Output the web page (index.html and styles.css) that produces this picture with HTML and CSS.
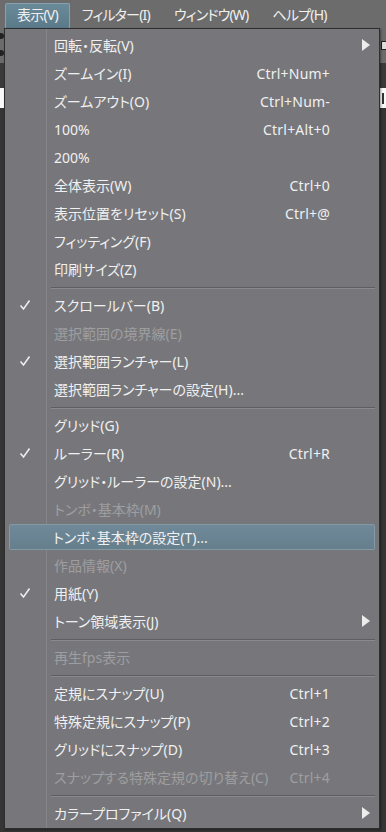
FILE: index.html
```html
<!DOCTYPE html>
<html lang="ja">

<head>
    <meta charset="UTF-8">
    <meta name="viewport" content="width=device-width, initial-scale=1.0">
    <title>表示メニュー</title>
    <link rel="stylesheet" href="styles.css">
</head>

<body>
    <header class="menubar">
        <span class="menubar-item is-open">表示(V)</span>
        <span class="menubar-item">フィルター(I)</span>
        <span class="menubar-item">ウィンドウ(W)</span>
        <span class="menubar-item">ヘルプ(H)</span>
    </header>

    <!-- application behind the open menu -->
    <div class="workspace">
        <div class="toolbar">
            <span class="dot"></span>
            <span class="dot"></span>
            <span class="tool-box"></span>
        </div>
        <div class="strip"></div>
        <div class="tabbar"><span class="tab-mark"></span></div>
        <div class="canvas"></div>
    </div>

    <div class="menu">
        <div class="row has-sub"><span class="check"></span><span class="label">回転・反転(V)</span><span class="key"></span><span class="arrow"></span></div>
        <div class="row"><span class="check"></span><span class="label">ズームイン(I)</span><span class="key">Ctrl+Num+</span><span class="arrow"></span></div>
        <div class="row"><span class="check"></span><span class="label">ズームアウト(O)</span><span class="key">Ctrl+Num-</span><span class="arrow"></span></div>
        <div class="row"><span class="check"></span><span class="label">100%</span><span class="key">Ctrl+Alt+0</span><span class="arrow"></span></div>
        <div class="row"><span class="check"></span><span class="label">200%</span><span class="key"></span><span class="arrow"></span></div>
        <div class="row"><span class="check"></span><span class="label">全体表示(W)</span><span class="key">Ctrl+0</span><span class="arrow"></span></div>
        <div class="row"><span class="check"></span><span class="label">表示位置をリセット(S)</span><span class="key">Ctrl+@</span><span class="arrow"></span></div>
        <div class="row"><span class="check"></span><span class="label">フィッティング(F)</span><span class="key"></span><span class="arrow"></span></div>
        <div class="row"><span class="check"></span><span class="label">印刷サイズ(Z)</span><span class="key"></span><span class="arrow"></span></div>
        <div class="separator"></div>
        <div class="row is-checked"><span class="check"></span><span class="label">スクロールバー(B)</span><span class="key"></span><span class="arrow"></span></div>
        <div class="row is-disabled"><span class="check"></span><span class="label">選択範囲の境界線(E)</span><span class="key"></span><span class="arrow"></span></div>
        <div class="row is-checked"><span class="check"></span><span class="label">選択範囲ランチャー(L)</span><span class="key"></span><span class="arrow"></span></div>
        <div class="row"><span class="check"></span><span class="label">選択範囲ランチャーの設定(H)...</span><span class="key"></span><span class="arrow"></span></div>
        <div class="separator"></div>
        <div class="row"><span class="check"></span><span class="label">グリッド(G)</span><span class="key"></span><span class="arrow"></span></div>
        <div class="row is-checked"><span class="check"></span><span class="label">ルーラー(R)</span><span class="key">Ctrl+R</span><span class="arrow"></span></div>
        <div class="row"><span class="check"></span><span class="label">グリッド・ルーラーの設定(N)...</span><span class="key"></span><span class="arrow"></span></div>
        <div class="row is-disabled"><span class="check"></span><span class="label">トンボ・基本枠(M)</span><span class="key"></span><span class="arrow"></span></div>
        <div class="row is-hover"><span class="check"></span><span class="label">トンボ・基本枠の設定(T)...</span><span class="key"></span><span class="arrow"></span></div>
        <div class="row is-disabled"><span class="check"></span><span class="label">作品情報(X)</span><span class="key"></span><span class="arrow"></span></div>
        <div class="row is-checked"><span class="check"></span><span class="label">用紙(Y)</span><span class="key"></span><span class="arrow"></span></div>
        <div class="row has-sub"><span class="check"></span><span class="label">トーン領域表示(J)</span><span class="key"></span><span class="arrow"></span></div>
        <div class="separator"></div>
        <div class="row is-disabled"><span class="check"></span><span class="label">再生fps表示</span><span class="key"></span><span class="arrow"></span></div>
        <div class="separator"></div>
        <div class="row"><span class="check"></span><span class="label">定規にスナップ(U)</span><span class="key">Ctrl+1</span><span class="arrow"></span></div>
        <div class="row"><span class="check"></span><span class="label">特殊定規にスナップ(P)</span><span class="key">Ctrl+2</span><span class="arrow"></span></div>
        <div class="row"><span class="check"></span><span class="label">グリッドにスナップ(D)</span><span class="key">Ctrl+3</span><span class="arrow"></span></div>
        <div class="row is-disabled"><span class="check"></span><span class="label">スナップする特殊定規の切り替え(C)</span><span class="key">Ctrl+4</span><span class="arrow"></span></div>
        <div class="separator"></div>
        <div class="row has-sub"><span class="check"></span><span class="label">カラープロファイル(Q)</span><span class="key"></span><span class="arrow"></span></div>
    </div>

    <script>
        const checkSvg = '<svg viewBox="0 0 12 12" width="12" height="12"><path d="M1.5 6.5 L4.5 10 L10.5 1.5" fill="none" stroke="#ececec" stroke-width="1.6"/></svg>';
        const arrowSvg = '<svg viewBox="0 0 8 12" width="8" height="12"><path d="M0 0 L8 6 L0 12 z" fill="#ececec"/></svg>';

        document.querySelectorAll(".row.is-checked .check").forEach((el) => {
            el.innerHTML = checkSvg;
        });
        document.querySelectorAll(".row.has-sub .arrow").forEach((el) => {
            el.innerHTML = arrowSvg;
        });
    </script>
</body>

</html>
```

FILE: styles.css
```css
/* General styling */
* {
    margin: 0;
    padding: 0;
    box-sizing: border-box;
}

body {
    width: 386px;
    height: 832px;
    overflow: hidden;
    display: flex;
    flex-direction: column;
    background-color: #333333;
    font-family: "Noto Sans", "Noto Sans CJK JP", sans-serif;
    font-size: 14px;
    font-feature-settings: "palt";
    color: #f0f0f0;
}

/* Menu bar */
.menubar {
    display: flex;
    align-items: flex-end;
    height: 28px;
    padding-left: 5px;
    background-color: #6c6c6c;
}

.menubar-item {
    height: 25px;
    line-height: 22px;
    padding: 0 10px;
    margin-right: 2px;
    letter-spacing: -0.8px;
    border: 1px solid transparent;
    border-bottom: 0;
}

.menubar-item.is-open {
    padding: 0 11px;
    margin-right: 1px;
    background: linear-gradient(#6a8a99, #5a7a8a);
    border-color: #86a2b0;
    border-radius: 2px 2px 0 0;
}

/* Application behind */
.workspace {
    flex: 1;
    display: flex;
    flex-direction: column;
}

.toolbar {
    position: relative;
    height: 35px;
    background-color: #6b6b6b;
}

.dot {
    position: absolute;
    left: -2px;
    width: 6px;
    height: 6px;
    border-radius: 50%;
    background-color: #222;
}

.dot:nth-child(1) {
    top: 5px;
}

.dot:nth-child(2) {
    top: 22px;
}

.tool-box {
    position: absolute;
    right: -3px;
    top: 13px;
    width: 8px;
    height: 9px;
    border: 1px solid #222;
    background-color: #ddd;
}

.strip {
    height: 25px;
    background-color: #3a3a3a;
}

.tabbar {
    height: 20px;
    background-color: #fafafa;
    display: flex;
    justify-content: flex-end;
    align-items: center;
}

.tab-mark {
    width: 3px;
    height: 11px;
    margin-right: 1px;
    border-left: 2px solid #333;
}

.canvas {
    flex: 1;
    background-color: #353535;
}

/* The open menu */
.menu {
    position: absolute;
    top: 28px;
    left: 4px;
    width: 376px;
    height: 801px;
    padding: 2px 0 1px;
    border: 1px solid #2e2e2e;
    background: linear-gradient(to right, #77777b 0, #77777b 41px, #86868a 41px, #86868a 42px, #77777b 42px);
    box-shadow: 1px 1px 2px rgba(0, 0, 0, 0.4);
}

.row {
    display: flex;
    align-items: center;
    height: 28px;
}

.check {
    width: 42px;
    flex-shrink: 0;
    display: flex;
    justify-content: center;
    padding-right: 2px;
}

.check svg {
    display: block;
}

.label {
    flex: 1;
    padding-left: 7px;
    white-space: nowrap;
}

.key {
    padding-right: 32px;
    white-space: nowrap;
    letter-spacing: 0.2px;
}

.arrow {
    width: 8px;
    margin-right: 9px;
    display: flex;
}

.row.is-disabled {
    color: #9e9ea0;
}

.row.is-hover {
    margin: 1px 4px;
    height: 26px;
    border: 1px solid #8399a3;
    border-radius: 2px;
    background: linear-gradient(#70899a, #667f8c);
}

.row.is-hover .check {
    width: 37px;
}

.row.is-hover .label {
    padding-left: 6px;
}

.separator {
    height: 8px;
    margin: 0 4px 0 46px;
    padding-top: 4px;
}

.separator::before {
    content: "";
    display: block;
    height: 1px;
    background-color: #5e5e60;
    box-shadow: 0 1px 0 #8a8a8d;
}
```
